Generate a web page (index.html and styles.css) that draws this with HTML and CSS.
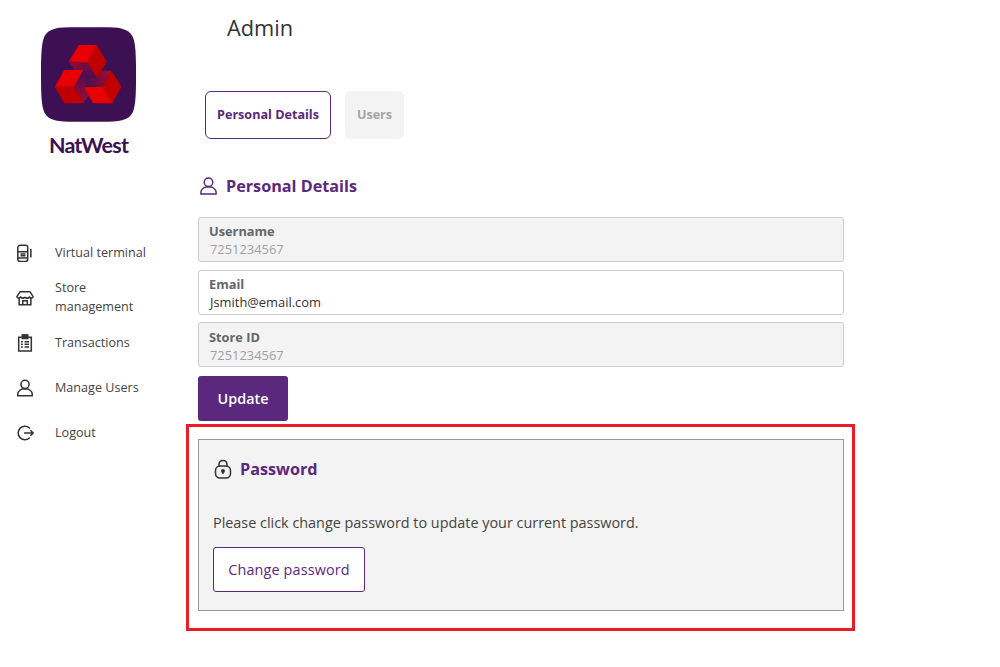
FILE: index.html
```html
<!DOCTYPE html>
<html lang="en">
<head>
<meta charset="utf-8">
<title>Admin</title>
<link rel="stylesheet" href="styles.css">
</head>
<body>
<div class="app">
  <aside class="sidebar">
    <div class="brand">
      <svg class="logo" viewBox="0 0 95 97" aria-hidden="true">
        <defs>
          <linearGradient id="r1" gradientUnits="userSpaceOnUse" x1="52" y1="64" x2="125" y2="105"><stop offset="0" stop-color="#a00a2e"/><stop offset="1" stop-color="#4e0f50"/></linearGradient>
          <linearGradient id="r2" gradientUnits="userSpaceOnUse" x1="110" y1="115" x2="85" y2="190"><stop offset="0" stop-color="#4e0f50"/><stop offset="1" stop-color="#a80a2a"/></linearGradient>
          <linearGradient id="r3" gradientUnits="userSpaceOnUse" x1="175" y1="95" x2="110" y2="135"><stop offset="0" stop-color="#a80a2a"/><stop offset="1" stop-color="#4e0f50"/></linearGradient>
        </defs>
        <path class="logo-bg" transform="scale(0.33)" d="M84 1C40 1 14 10 7 38C1 60 0 90 0 144C0 198 1 228 7 250C14 278 40 287 84 287H204C248 287 274 278 281 250C287 228 288 198 288 144C288 90 287 60 281 38C274 10 248 1 204 1Z"/>
        <g transform="translate(10.500 13) scale(0.3333)">
          <path fill="url(#r1)" d="M52 64L108 68L136 113H118L95 90H70Z"/>
          <path fill="url(#r2)" d="M95 90L68 140L95 190L117 160L97 141L118 113Z"/>
          <path fill="url(#r3)" d="M180 92L153 140L97 142L118 113H136L150 92Z"/>
          <path class="bright" d="M82 15H136L108 68L52 64Z"/>
          <path class="dark" d="M136 15L166 65L136 113L108 68Z"/>
          <path class="bright" d="M38 90H95L68 140H10Z"/>
          <path class="dark" d="M10 140H68L95 190H38Z"/>
          <path class="bright" d="M97 142L153 140L183 190H125Z"/>
          <path class="dark" d="M180 92L210 140L183 190L153 140Z"/>
        </g>
      </svg>
      <div class="wordmark">NatWest</div>
    </div>
    <nav class="nav">
      <a class="nav-item">
        <svg class="nav-icon" viewBox="0 0 20 20" aria-hidden="true"><rect x="2" y="1.500" width="11" height="18" rx="2.500"/><path d="M2 8.500H13M2 15.500H13M5 11H10.500M5 13H10.500M16.500 5.500V15"/></svg>
        <span>Virtual terminal</span>
      </a>
      <a class="nav-item nav-item-tall">
        <svg class="nav-icon" viewBox="0 0 20 20" aria-hidden="true"><path d="M4.500 3H15.500L19 8.500C19 10 16.500 10.500 15 9C14 10 12 10.500 10 9.500C8 10.500 6 10 5 9C3.500 10.500 1 10 1 8.500Z"/><path d="M3.500 10V17.500H16.500V10M7.500 17.500V13H12.500V17.500"/></svg>
        <span>Store management</span>
      </a>
      <a class="nav-item">
        <svg class="nav-icon" viewBox="0 0 20 20" aria-hidden="true"><path d="M7 3.500H3V19H17V3.500H13"/><rect class="solid" x="7" y="1" width="6" height="4"/><path d="M5.500 8.500H7.500M9.500 8.500H14.500M5.500 11.500H7.500M9.500 11.500H14.500M5.500 14.500H7.500M9.500 14.500H14.500"/></svg>
        <span>Transactions</span>
      </a>
      <a class="nav-item">
        <svg class="nav-icon" viewBox="0 0 20 20" aria-hidden="true"><circle cx="10" cy="6" r="4.500"/><path d="M2 18.500V16.500C2 13.500 5 12 7 11H13C15 12 18 13.500 18 16.500V18.500Z"/></svg>
        <span>Manage Users</span>
      </a>
      <a class="nav-item">
        <svg class="nav-icon" viewBox="0 0 20 20" aria-hidden="true"><path d="M15.500 5A7.500 7.500 0 1 0 15.500 15M9 10H19M16 7L19 10L16 13"/></svg>
        <span>Logout</span>
      </a>
    </nav>
  </aside>
  <main class="main">
    <h1 class="page-title">Admin</h1>
    <div class="tabs">
      <button class="tab tab-active">Personal Details</button>
      <button class="tab tab-muted">Users</button>
    </div>
    <h2 class="section-title">
      <svg class="section-icon" viewBox="0 0 20 20" aria-hidden="true"><circle cx="10" cy="6" r="4.500"/><path d="M2 18.500V16.500C2 13.500 5 12 7 11H13C15 12 18 13.500 18 16.500V18.500Z"/></svg>
      Personal Details
    </h2>
    <div class="fields">
      <div class="field field-disabled"><label>Username</label><div class="value">7251234567</div></div>
      <div class="field"><label>Email</label><div class="value">Jsmith@email.com</div></div>
      <div class="field field-disabled"><label>Store ID</label><div class="value">7251234567</div></div>
    </div>
    <button class="update">Update</button>
    <div class="highlight">
      <section class="password">
        <h2 class="password-title">
          <svg class="lock-icon" viewBox="0 0 18 20" aria-hidden="true"><path d="M5 8V5.500C5 3 6.800 1.500 9 1.500S13 3 13 5.500V8"/><rect x="1.500" y="7" width="15" height="12" rx="4.500"/><circle class="solid" cx="9" cy="12" r="1.200"/><path d="M9 12V15"/></svg>
          Password
        </h2>
        <p class="password-text">Please click change password to update your current password.</p>
        <button class="change">Change password</button>
      </section>
    </div>
  </main>
</div>
</body>
</html>
```

FILE: styles.css
```css
* { box-sizing: border-box; }
html, body { margin: 0; padding: 0; background: #fff; }
body { font-family: "Open Sans", "Liberation Sans", sans-serif; color: #444; height: 667px; overflow: hidden; }
button { font-family: inherit; cursor: pointer; }

.app { display: flex; align-items: flex-start; }

.sidebar { width: 198px; flex: none; padding-top: 27px; }
.brand { width: 177px; display: flex; flex-direction: column; align-items: center; }
.logo { width: 95px; height: 97px; display: block; }
.logo-bg { fill: #3c1053; }
.bright { fill: #e80000; }
.dark { fill: #c00000; }
.wordmark { font-family: "Lato", sans-serif; font-weight: 700; font-size: 21.500px; line-height: 30px; color: #3c1053; letter-spacing: -0.800px; margin-top: 6px; }

.nav { margin-top: 70px; display: flex; flex-direction: column; }
.nav-item { height: 45px; display: flex; align-items: center; font-size: 12.600px; line-height: 19px; color: #444; padding-left: 16px; }
.nav-item span { width: 95px; margin-left: 21px; }
.nav-item-tall span { margin-bottom: 2px; }
.nav-icon { width: 18px; height: 18px; flex: none; fill: none; stroke: #333; stroke-width: 1.700; }
.solid { fill: #333; stroke: #333; }

.main { width: 646px; }
.page-title { margin: 13px 0 0 29px; font-size: 21.800px; line-height: 30px; font-weight: 400; color: #333; }
.tabs { display: flex; gap: 14px; margin: 48px 0 0 7px; }
.tab { height: 48px; border-radius: 6px; font-size: 12.600px; line-height: 46px; font-weight: 700; padding: 0 0 1px; }
.tab-active { width: 126px; background: #fff; border: 1px solid #5a287d; color: #5a287d; }
.tab-muted { width: 59px; background: #f3f3f3; border: 0; color: #a5a5a5; }

.section-title { display: flex; align-items: center; margin: 33px 0 0 1px; font-size: 16.200px; line-height: 28px; font-weight: 700; color: #5a287d; }
.section-icon { width: 19px; height: 20px; margin-right: 8px; fill: none; stroke: #5a287d; stroke-width: 1.500; }

.fields { display: flex; flex-direction: column; gap: 7.600px; margin-top: 17px; }
.field { height: 45px; border: 1px solid #ccc; border-radius: 3px; padding: 4.400px 10px 0; background: #fff; }
.field label { display: block; font-size: 12.800px; line-height: 18px; font-weight: 700; color: #666; }
.value { font-size: 12.900px; line-height: 18px; color: #333; padding-left: 1px; }
.field-disabled { background: #f3f3f3; }
.field-disabled .value { color: #a0a0a0; }

.update { display: block; width: 90px; height: 45px; margin-top: 8.800px; border: 0; border-radius: 3px; background: #5a287d; color: #fff; font-size: 14.400px; font-weight: 600; }

.highlight { width: 669px; height: 207px; margin: 3px 0 0 -12px; padding: 12px 8px 0 9px; border: 3px solid #ed1c24; }
.password { height: 172px; border: 1px solid #999; background: #f3f3f3; padding: 15px 14px 0; }
.password-title { display: flex; align-items: center; margin: 0; font-size: 16.200px; line-height: 28px; font-weight: 700; color: #5a287d; }
.lock-icon { width: 18px; height: 20px; margin-left: 1px; margin-right: 8px; fill: none; stroke: #333; stroke-width: 1.500; }
.password-text { margin: 30px 0 0; font-size: 14.400px; line-height: 20px; color: #444; }
.change { display: block; width: 152px; height: 45px; margin-top: 14px; border: 1px solid #5a287d; border-radius: 3px; background: #fff; color: #5a287d; font-size: 14.400px; letter-spacing: 0.150px; padding: 0; }
```
